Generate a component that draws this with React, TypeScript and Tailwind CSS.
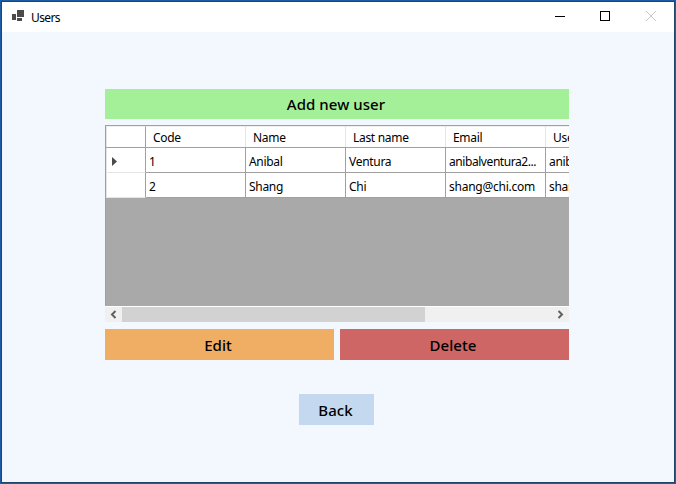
import React from "react";

type User = { code: string; name: string; lastName: string; email: string; username: string };

const users: User[] = [
  { code: "1", name: "Anibal", lastName: "Ventura", email: "anibalventura2...", username: "anib" },
  { code: "2", name: "Shang", lastName: "Chi", email: "shang@chi.com", username: "shan" },
];

const headers = ["Code", "Name", "Last name", "Email", "User"];

function TitleBar() {
  return (
    <header className="flex h-[30px] shrink-0 items-center bg-white">
      <svg className="mb-[2px] ml-[10px] h-3 w-3" viewBox="0 0 12 12" fill="#4b4b4b" shapeRendering="crispEdges">
        <path d="M0 4h4v6H0zM5 0h7v7H5zM5 8h5v3H5z" />
      </svg>
      <h1 className="ml-[7px] pt-[2px] text-[12px] leading-4 tracking-[-0.6px]">Users</h1>
      <div className="ml-auto flex items-center">
        <svg className="h-[30px] w-[46px]" viewBox="0 0 46 30" shapeRendering="crispEdges">
          <path d="M19 14h10v1H19z" />
        </svg>
        <svg className="h-[30px] w-[46px]" viewBox="0 0 46 30" fill="none" stroke="#000" shapeRendering="crispEdges">
          <path d="M18.5 9.5h9v9h-9z" />
        </svg>
        <svg className="h-[30px] w-[46px]" viewBox="0 0 46 30" fill="none" stroke="#c8c8c8">
          <path d="M18 9l10 10M28 9L18 19" />
        </svg>
      </div>
    </header>
  );
}

function Cell({ children, className = "tracking-[-0.3px]" }: { children: React.ReactNode; className?: string }) {
  return (
    <div
      className={`flex h-full w-[100px] shrink-0 items-center border-r border-[#a0a0a0] pl-[3px] pt-[3px] whitespace-nowrap ${className}`}
    >
      {children}
    </div>
  );
}

function UserGrid() {
  return (
    <div className="mt-[6px] h-[197px] w-[464px] overflow-hidden">
      <div className="h-[181px] overflow-hidden border-l border-t border-[#a0a0a0] bg-[#a9a9a9] text-[12px] leading-4">
        <div className="flex h-[22px] w-[540px] border-b border-[#a0a0a0] bg-white">
          <div className="w-10 shrink-0 border-l border-t border-r border-l-[#e5e5e5] border-t-[#f0f0f0] border-r-[#a0a0a0]" />
          {headers.map((h) => (
            <div
              key={h}
              className="flex w-[100px] shrink-0 items-center border-r border-t border-r-[#e5e5e5] border-t-[#f0f0f0] pl-[7px] pt-[2px] tracking-[-0.3px] whitespace-nowrap"
            >
              {h}
            </div>
          ))}
        </div>
        {users.map((u, i) => (
          <div key={u.code} className="flex h-[25px] w-[540px] bg-white">
            <div className="flex w-10 shrink-0 items-center border-b border-l border-r border-b-[#e5e5e5] border-l-[#e5e5e5] border-r-[#a0a0a0] pl-[5px] pt-[3px]">
              {i === 0 && (
                <svg className="h-[9px] w-[5px]" viewBox="0 0 5 9" fill="#4b4b4b">
                  <path d="M0 0l5 4.5L0 9z" />
                </svg>
              )}
            </div>
            <div className="flex border-b border-[#a0a0a0]">
              <Cell>{u.code}</Cell>
              <Cell>{u.name}</Cell>
              <Cell>{u.lastName}</Cell>
              <Cell className={i === 0 ? "tracking-[-0.43px]" : "tracking-[-0.25px]"}>{u.email}</Cell>
              <Cell>{u.username}</Cell>
            </div>
          </div>
        ))}
      </div>
      <div className="flex h-4 border-t border-white bg-[#f0f0f0]">
        <svg className="h-[15px] w-[17px]" viewBox="0 0 17 15" fill="none" stroke="#606060" strokeWidth="2">
          <path d="M10.5 4L7 7.5l3.5 3.5" />
        </svg>
        <div className="h-[15px] w-[303px] bg-[#d2d2d2]" />
        <svg className="ml-auto h-[15px] w-[17px]" viewBox="0 0 17 15" fill="none" stroke="#606060" strokeWidth="2">
          <path d="M6.5 4L10 7.5 6.5 11" />
        </svg>
      </div>
    </div>
  );
}

export default function App() {
  return (
    <div className="h-[484px] w-[676px] border border-[#1d5ba3] font-['Noto_Sans','Open_Sans',sans-serif] text-black">
      <div className="flex h-full flex-col border border-[#20456f] bg-[#f3f8ff]">
        <TitleBar />
        <main className="ml-[103px] mt-[57px] flex w-[464px] flex-col">
          <button className="h-[30px] bg-[#a4f098] pr-[2px] text-[15px] font-[550] leading-5 tracking-[0.05px]">
            Add new user
          </button>
          <UserGrid />
          <div className="mt-[7px] grid h-[31px] grid-cols-2 gap-[6px] text-[15px] font-[550] leading-5 tracking-[0.05px]">
            <button className="bg-[#f0ae64] pr-[3px] pt-px">Edit</button>
            <button className="bg-[#cd6665] pr-[3px] pt-px">Delete</button>
          </div>
          <button className="ml-[194px] mt-[34px] h-[31px] w-[75px] bg-[#c4d8ef] pr-[2px] pt-px text-[15px] font-[550] leading-5 tracking-[0.05px]">
            Back
          </button>
        </main>
      </div>
    </div>
  );
}
